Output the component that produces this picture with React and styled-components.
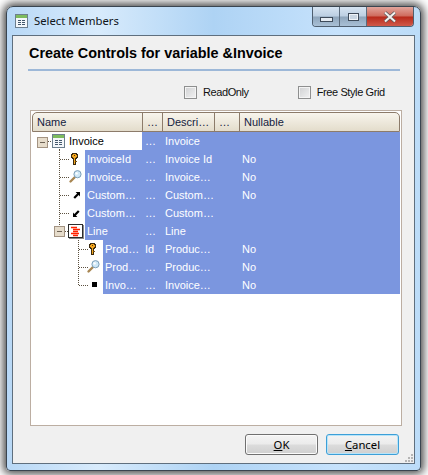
import styled, { createGlobalStyle } from 'styled-components'

const COLUMNS = "110px 20px 52px 25px 1fr";
const UI_FONT = '"Noto Sans", "Open Sans", "Liberation Sans", sans-serif';
const GRID_FONT = '"Liberation Sans", Arial, sans-serif';

const GlobalStyle = createGlobalStyle`
    html, body {
        margin: 0;
        background: #fff;
    }
    #root {
        width: 428px;
        height: 475px;
        overflow: hidden;
        padding: 6px 7px 4px 6px;
        box-sizing: border-box;
    }
`

const rows = [
    {name: "Invoice", level: 0, icon: "table", expander: true, col2: "…", desc: "Invoice", nullable: "", plain: true},
    {name: "InvoiceId", level: 1, icon: "key", col2: "…", desc: "Invoice Id", nullable: "No"},
    {name: "Invoice…", level: 1, icon: "lens", col2: "…", desc: "Invoice…", nullable: "No"},
    {name: "Custom…", level: 1, icon: "up", col2: "…", desc: "Custom…", nullable: "No"},
    {name: "Custom…", level: 1, icon: "down", col2: "…", desc: "Custom…", nullable: ""},
    {name: "Line", level: 1, icon: "level", expander: true, col2: "…", desc: "Line", nullable: ""},
    {name: "Prod…", level: 2, icon: "key", col2: "Id", desc: "Produc…", nullable: "No"},
    {name: "Prod…", level: 2, icon: "lens", col2: "…", desc: "Produc…", nullable: "No"},
    {name: "Invo…", level: 2, icon: "square", last: true, col2: "…", desc: "Invoice…", nullable: "No"},
];

const TableIcon = ({x, y}) => (
    <g transform={`translate(${x} ${y})`} shapeRendering="crispEdges">
        <rect x=".5" y=".5" width="12" height="13" fill="#f4f7fa" stroke="#6d7f8e"/>
        <rect x="1" y="1" width="11" height="3" fill="#7dbb5e"/>
        <path d="M3 6.5h3M7 6.5h3M3 8.5h3M7 8.5h3M3 10.5h3M7 10.5h3" stroke="#44586c"/>
    </g>
);

const KeyIcon = ({x, y}) => (
    <g transform={`translate(${x} ${y})`} shapeRendering="crispEdges">
        <path d="M1 0h5v1h1v4h-1v1h-1v6h-3v-6h-1v-1h-1v-4h1z" fill="#3b2a10"/>
        <path d="M2 1h3v1h1v2h-1v1h-1v6h-1v-6h-1v-1h-1v-2h1z" fill="#f2a51e"/>
        <rect x="3" y="2" width="1" height="1" fill="#5a3a08"/>
        <rect x="4" y="8" width="2" height="1" fill="#7a5410"/>
    </g>
);

const LensIcon = ({x, y}) => (
    <g transform={`translate(${x} ${y})`}>
        <path d="M1.5 11.5l4.5-4.5" stroke="#a88652" strokeWidth="2.4" strokeLinecap="round"/>
        <circle cx="8.5" cy="4.2" r="3.6" fill="#cfe8f7" stroke="#7d9fb8"/>
        <circle cx="7.6" cy="3.4" r="1.2" fill="#fff"/>
    </g>
);

const ArrowUpIcon = ({x, y}) => (
    <g transform={`translate(${x} ${y})`}>
        <path d="M2.6 0H7V4.4L5.7 3.1 2 6.8 .4 5.2 4.1 1.5z" fill="#000"/>
    </g>
);

const ArrowDownIcon = ({x, y}) => (
    <g transform={`translate(${x} ${y}) rotate(180 3.5 3.5)`}>
        <path d="M2.6 0H7V4.4L5.7 3.1 2 6.8 .4 5.2 4.1 1.5z" fill="#000"/>
    </g>
);

const LevelIcon = ({x, y}) => (
    <g transform={`translate(${x} ${y})`}>
        <g shapeRendering="crispEdges">
            <rect x=".5" y=".5" width="14" height="13" fill="#fff" stroke="#2c2c2c"/>
            <path d="M15.5 1v13.5H1" stroke="#8a8a8a" fill="none"/>
        </g>
        <path d="M3 3.5h6M5 5.5h7M5 7.5h5M3 9.5h8M5 11.5h5" stroke="#ff2200" strokeWidth="1.3"/>
    </g>
);

const Expander = ({x, y}) => (
    <g transform={`translate(${x} ${y})`} shapeRendering="crispEdges">
        <rect x=".5" y=".5" width="10" height="10" rx="1" fill="#e6dccb" stroke="#a39382"/>
        <path d="M3 5.5h5" stroke="#6d6255"/>
    </g>
);

const Dots = ({d}) => (
    <path d={d} stroke="#5c5140" strokeDasharray="1 1" fill="none" shapeRendering="crispEdges"/>
);

// tree gutter of one row: coordinates are from the left of the name column
const TreeGutter = ({row}) => {
    const width = [35, 53, 71][row.level];
    return (
        <svg width={width} height="18" style={{flex: "none", display: "block"}}>
            {row.level === 0 && <>
                <Expander x={5} y={5}/>
                <Dots d="M16 9.5h4M27.5 17v1"/>
                <TableIcon x={20} y={2}/>
            </>}
            {row.level === 1 && !row.expander && <Dots d="M27.5 0v18M28 9.5h10"/>}
            {row.level === 1 && row.expander && <>
                <Dots d="M27.5 0v4M33 9.5h3M46.5 16v2"/>
                <Expander x={22} y={4}/>
                <LevelIcon x={36} y={2}/>
            </>}
            {row.level === 2 && <Dots d={`M46.5 0v${row.last ? 10 : 18}M47 9.5h9`}/>}
            {row.icon === "key" && <KeyIcon x={row.level === 1 ? 39 : 57} y={3}/>}
            {row.icon === "lens" && <LensIcon x={row.level === 1 ? 37 : 55} y={2}/>}
            {row.icon === "up" && <ArrowUpIcon x={41} y={6}/>}
            {row.icon === "down" && <ArrowDownIcon x={41} y={6}/>}
            {row.icon === "square" && <rect x="60" y="6" width="5" height="5" fill="#000" shapeRendering="crispEdges"/>}
        </svg>
    );
};

const App = () => {
    return (
    <>
        <GlobalStyle/>
        <Window>
            <TitleBar>
                <svg width="14" height="14" style={{flex: "none"}}>
                    <TableIcon x={0} y={0}/>
                </svg>
                <Title>Select Members</Title>
                <CaptionButtons>
                    <CaptionButton><MinimizeGlyph/></CaptionButton>
                    <CaptionButton><MaximizeGlyph/></CaptionButton>
                    <CloseButton>
                        <svg width="14" height="12" viewBox="0 0 14 12">
                            <path d="M2 1.5l10 9M12 1.5l-10 9" stroke="#5c5c60" strokeWidth="3.6"/>
                            <path d="M2 1.5l10 9M12 1.5l-10 9" stroke="#f4f1ee" strokeWidth="2"/>
                        </svg>
                    </CloseButton>
                </CaptionButtons>
            </TitleBar>
            <Client>
                <Heading>Create Controls for variable &amp;Invoice</Heading>
                <Separator/>
                <Options>
                    <CheckLabel><CheckBox/>ReadOnly</CheckLabel>
                    <CheckLabel><CheckBox/>Free Style Grid</CheckLabel>
                </Options>
                <Grid>
                    <HeaderRow>
                        <HeaderCell>Name</HeaderCell>
                        <HeaderCell>…</HeaderCell>
                        <HeaderCell>Descri…</HeaderCell>
                        <HeaderCell>…</HeaderCell>
                        <HeaderCell>Nullable</HeaderCell>
                    </HeaderRow>
                    {rows.map((row, index) => (
                        <Row key={index}>
                            <NameCell>
                                <TreeGutter row={row}/>
                                <NameLabel plain={row.plain}>{row.name}</NameLabel>
                            </NameCell>
                            <Cell>{row.col2}</Cell>
                            <Cell>{row.desc}</Cell>
                            <Cell></Cell>
                            <Cell>{row.nullable}</Cell>
                        </Row>
                    ))}
                </Grid>
                <Footer>
                    <Button><u>O</u>K</Button>
                    <Button focused><u>C</u>ancel</Button>
                    <Grip width="9" height="9">
                        <path d="M7 1h2v2h-2zM4 4h2v2h-2zM7 4h2v2h-2zM1 7h2v2h-2zM4 7h2v2h-2zM7 7h2v2h-2z" fill="#b5b5b5"/>
                    </Grip>
                </Footer>
            </Client>
        </Window>
    </>
    )
};

const MinimizeGlyph = styled.span`
    width: 11px;
    height: 3px;
    margin-top: 6px;
    background: #e4ebf2;
    border: 1px solid #3e4b5a;
`

const MaximizeGlyph = styled.span`
    width: 9px;
    height: 6px;
    background: #c9d6e3;
    border: 1px solid #3e4b5a;
    box-shadow: inset 0 0 0 1px #eef3f8;
`

const Window = styled.div`
    width: 415px;
    height: 465px;
    display: flex;
    flex-direction: column;
    box-sizing: border-box;
    border-radius: 7px 7px 4px 4px;
    border: 1px solid #3a4550;
    box-shadow: 0 0 8px 3px rgba(0, 0, 0, 0.7);
    background: linear-gradient(90deg, #b8d8f6 0%, #d8ebfc 22%, #aed3f4 50%, #c6e2fc 80%, #bcdcf8 100%);
`

const TitleBar = styled.div`
    height: 28px;
    flex: none;
    display: flex;
    align-items: flex-start;
    padding: 7px 6px 0 8px;
    box-sizing: border-box;
`

const Title = styled.div`
    margin: -1px 0 0 5px;
    font: 11.3px/16px ${UI_FONT};
    color: #10151a;
`

const CaptionButtons = styled.div`
    margin: -7px 0 0 auto;
    display: flex;
    height: 19px;
    border: 1px solid #4f5f70;
    border-top: none;
    border-radius: 0 0 4px 4px;
    overflow: hidden;
`

const CaptionButton = styled.div`
    width: 27px;
    display: flex;
    align-items: center;
    justify-content: center;
    border-right: 1px solid #5b6b7c;
    box-sizing: border-box;
    background: linear-gradient(180deg, #d6e4f2 0%, #bccfe2 48%, #8ea5bb 52%, #a9c0d6 100%);
`

const CloseButton = styled.div`
    width: 46px;
    display: flex;
    align-items: center;
    justify-content: center;
    background: linear-gradient(180deg, #e2a59c 0%, #cf6a5c 48%, #b8291a 52%, #d0594a 100%);
`

const Client = styled.div`
    flex: 1;
    margin: 0 5px 6px 5px;
    padding: 7px 12px 0 17px;
    position: relative;
    display: flex;
    flex-direction: column;
    border: 1px solid #5f6f7e;
    background: #f0f0f0;
`

const Heading = styled.div`
    height: 20px;
    margin-left: -1px;
    font: bold 14.4px/20px "Liberation Sans", Arial, sans-serif;
    color: #000;
    white-space: nowrap;
`

const Separator = styled.div`
    height: 2px;
    margin: 6px 2px 0 -2px;
    background: #9db8d8;
`

const Options = styled.div`
    height: 13px;
    margin-top: 15px;
    display: flex;
    padding-left: 154px;
    gap: 49px;
`

const CheckLabel = styled.label`
    display: flex;
    align-items: center;
    gap: 6px;
    font: 11px/13px ${GRID_FONT};
    letter-spacing: -0.4px;
    color: #111;
    white-space: nowrap;
`

const CheckBox = styled.span`
    width: 11px;
    height: 11px;
    border: 1px solid #8e8f8f;
    box-shadow: inset 0 0 0 1px #f4f4f4;
    background: linear-gradient(135deg, #cfd0d2, #f2f2f3);
`

const Grid = styled.div`
    height: 316px;
    margin-top: 11px;
    padding: 1px;
    box-sizing: border-box;
    border: 1px solid #bcaea2;
    background: #fff;
`

const HeaderRow = styled.div`
    height: 20px;
    display: grid;
    grid-template-columns: ${COLUMNS};
    box-sizing: border-box;
    border: 1px solid #8c7b6a;
    border-radius: 5px 5px 0 0;
    background: linear-gradient(180deg, #f8f5ed 0%, #e3dccb 100%);
`

const HeaderCell = styled.div`
    padding-left: 4px;
    font: 11px/18px ${GRID_FONT};
    color: #14213d;
    border-right: 1px solid #8c7b6a;
    white-space: nowrap;
    overflow: hidden;
    &:last-child {
        border-right: none;
    }
`

const Row = styled.div`
    height: 18px;
    display: grid;
    grid-template-columns: ${COLUMNS};
    font: 11px/18px ${GRID_FONT};
    color: #fff;
`

const NameCell = styled.div`
    display: flex;
    min-width: 0;
`

const NameLabel = styled.div`
    flex: 1;
    padding-left: 2px;
    white-space: nowrap;
    color: ${props => props.plain ? "#000" : "#fff"};
    background: ${props => props.plain ? "#fff" : "#7b96df"};
`

const Cell = styled.div`
    padding-left: 3px;
    white-space: nowrap;
    overflow: hidden;
    background: #7b96df;
`

const Footer = styled.div`
    margin: 8px 3px 0 0;
    display: flex;
    justify-content: flex-end;
    gap: 8px;
`

const Button = styled.div`
    width: 73px;
    height: 21px;
    box-sizing: border-box;
    text-align: center;
    font: 11.3px/19px ${UI_FONT};
    color: #000;
    border: 1px solid ${props => props.focused ? "#3c9fd8" : "#707070"};
    border-radius: 3px;
    box-shadow: inset 0 0 0 1px ${props => props.focused ? "#b8e4f8" : "#fbfbfb"};
    background: linear-gradient(180deg, #f4f4f4 0%, #ebebeb 48%, #dcdcdc 52%, #cfcfcf 100%);
`

const Grip = styled.svg`
    position: absolute;
    right: 1px;
    bottom: 1px;
`

export default App;
